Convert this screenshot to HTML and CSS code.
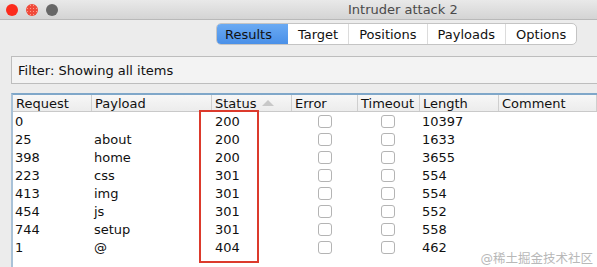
FILE: index.html
```html
<!DOCTYPE html>
<html lang="en">

    <head>
        <meta charset="UTF-8">
        <meta name="viewport" content="width=device-width, initial-scale=1.0">
        <title>Intruder attack 2</title>

        <link rel="stylesheet" href="styles.css">
    </head>

    <body>
        <div class="titlebar">
            <span class="light red"></span>
            <span class="light orange"></span>
            <span class="light gray"></span>
            <span class="title">Intruder attack 2</span>
        </div>

        <main>
            <nav class="tabs">
                <span class="tab active">Results</span>
                <span class="tab">Target</span>
                <span class="tab">Positions</span>
                <span class="tab">Payloads</span>
                <span class="tab">Options</span>
            </nav>

            <div class="filter">Filter: Showing all items</div>

            <div class="table">
                <div class="row head">
                    <span>Request</span>
                    <span>Payload</span>
                    <span class="sorted">Status <i class="arrow"></i></span>
                    <span>Error</span>
                    <span>Timeout</span>
                    <span>Length</span>
                    <span>Comment</span>
                </div>
                <div class="rows">
                    <div class="row"><span>0</span><span></span><span class="num">200</span><span><i class="check"></i></span><span><i class="check"></i></span><span>10397</span><span></span></div>
                    <div class="row"><span>25</span><span>about</span><span class="num">200</span><span><i class="check"></i></span><span><i class="check"></i></span><span>1633</span><span></span></div>
                    <div class="row"><span>398</span><span>home</span><span class="num">200</span><span><i class="check"></i></span><span><i class="check"></i></span><span>3655</span><span></span></div>
                    <div class="row"><span>223</span><span>css</span><span class="num">301</span><span><i class="check"></i></span><span><i class="check"></i></span><span>554</span><span></span></div>
                    <div class="row"><span>413</span><span>img</span><span class="num">301</span><span><i class="check"></i></span><span><i class="check"></i></span><span>554</span><span></span></div>
                    <div class="row"><span>454</span><span>js</span><span class="num">301</span><span><i class="check"></i></span><span><i class="check"></i></span><span>552</span><span></span></div>
                    <div class="row"><span>744</span><span>setup</span><span class="num">301</span><span><i class="check"></i></span><span><i class="check"></i></span><span>558</span><span></span></div>
                    <div class="row"><span>1</span><span>@</span><span class="num">404</span><span><i class="check"></i></span><span><i class="check"></i></span><span>462</span><span></span></div>
                    <div class="highlight"></div>
                </div>
                <div class="watermark">@稀土掘金技术社区</div>
            </div>
        </main>
    </body>

</html>
```

FILE: styles.css
```css
* {
    box-sizing: border-box;
}

body,
html {
    margin: 0;
    padding: 0;
    height: 100%;
    width: 100%;
    overflow: hidden;
    background-color: #ececec;
    font-family: 'DejaVu Sans', 'Noto Sans CJK SC', sans-serif;
    font-size: 13px;
    color: #111;
}

.titlebar {
    height: 20px;
    display: flex;
    align-items: center;
    padding-left: 6px;
    background: linear-gradient(to bottom, #e9e9e9, #d4d4d4);
    border-bottom: 1px solid #b9b9b9;
}

.light {
    width: 12px;
    height: 12px;
    border-radius: 50%;
    margin-right: 8px;
}

.light.red {
    background-color: #fc2b1c;
}

.light.orange {
    background-color: #f04a3a;
    background-image: radial-gradient(#ff9a8a 30%, transparent 32%);
    background-size: 3px 3px;
}

.light.gray {
    background-color: #676767;
}

.title {
    margin-left: 282px;
    color: #4a4a4a;
    font-size: 13px;
}

main {
    display: flex;
    flex-direction: column;
    padding-left: 11px;
}

.tabs {
    display: flex;
    align-self: flex-start;
    margin-top: 3px;
    margin-left: 205px;
    height: 22px;
    background-color: #fff;
    border: 1px solid #c4c4c4;
    border-radius: 5px;
}

.tab {
    display: flex;
    align-items: center;
    padding: 0 10px;
    border-left: 1px solid #dcdcdc;
}

.tab:first-child {
    border-left: none;
}

.tab.active {
    background: linear-gradient(to bottom, #6aaaf3, #4a90e8);
    border-radius: 4px 0 0 4px;
    padding: 0 16px 0 8px;
}

.tab.active + .tab {
    border-left: none;
}

.filter {
    margin-top: 11px;
    height: 28px;
    padding-left: 6px;
    display: flex;
    align-items: center;
    background-color: #f3f3f3;
    border: 1px solid #bdbdbd;
    border-right: none;
}

.table {
    position: relative;
    margin-top: 9px;
    height: 180px;
    background-color: #fff;
    border-top: 2px solid #7fa7c9;
    border-left: 2px solid #a9c2d8;
}

.row {
    display: grid;
    grid-template-columns: 79px 120px 80px 66px 62px 79px 1fr;
    height: 18px;
    align-items: center;
}

.row span {
    padding-left: 2px;
    white-space: nowrap;
}

.row.head {
    height: 17px;
    background: linear-gradient(to bottom, #f7f7f7, #ececec);
    border-bottom: 1px solid #c9c9c9;
}

.row.head span {
    height: 100%;
    display: flex;
    align-items: center;
    border-right: 1px solid #cfcfcf;
    padding-left: 3px;
}

.row.head .sorted {
    gap: 6px;
}

.arrow {
    width: 0;
    height: 0;
    border-left: 6px solid transparent;
    border-right: 6px solid transparent;
    border-bottom: 6px solid #c8c8c8;
}

.rows {
    position: relative;
}

.row .num {
    padding-left: 3px;
}

.check {
    display: block;
    width: 14px;
    height: 13px;
    margin-left: 24px;
    border: 1px solid #b4b4b4;
    border-radius: 3px;
    background-color: #fff;
}

.row span:nth-child(5) .check {
    margin-left: 21px;
}

.highlight {
    position: absolute;
    left: 186px;
    top: -2px;
    width: 60px;
    height: 153px;
    border: 2px solid #dc3a2c;
}

.watermark {
    position: absolute;
    right: 4px;
    top: 153px;
    color: #b8b8b8;
    font-size: 12.5px;
}
```
